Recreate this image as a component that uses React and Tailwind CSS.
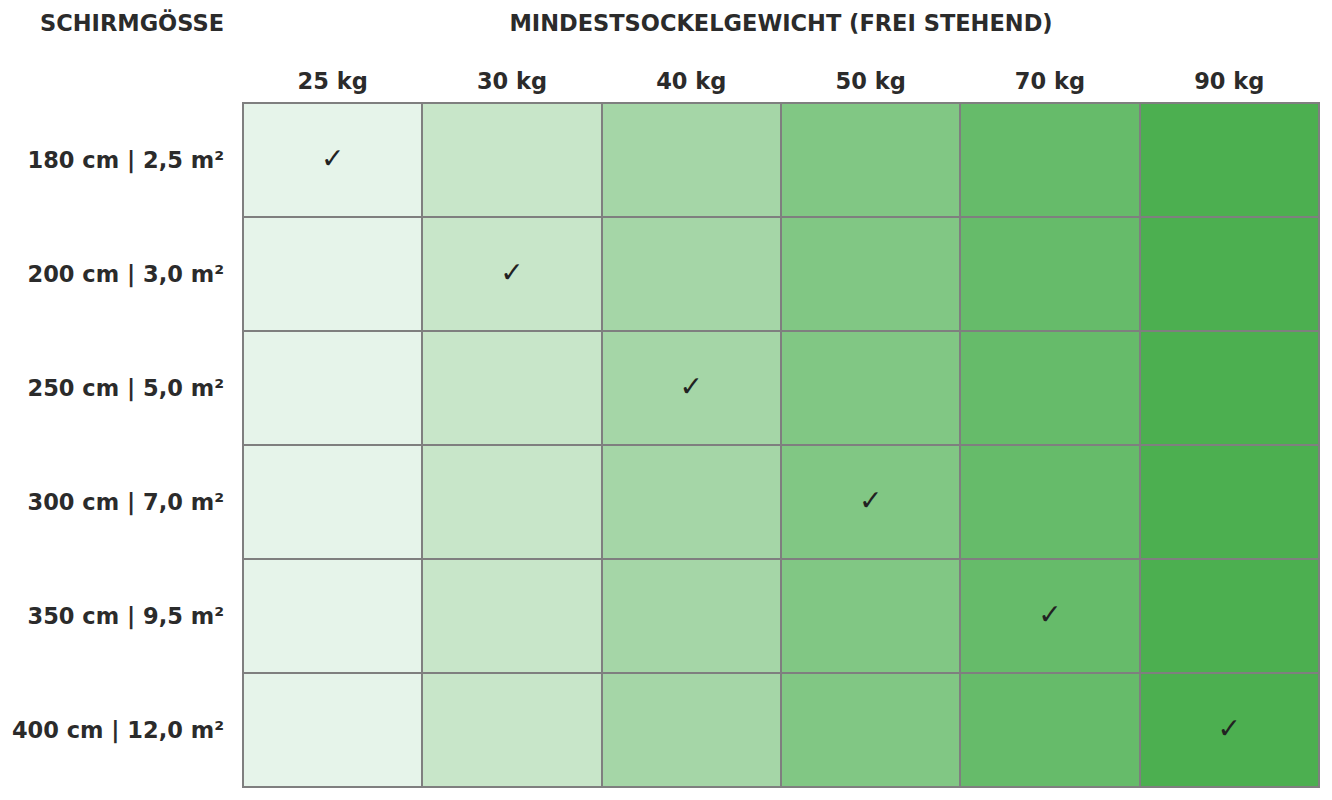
import React from "react";

const weights = ["25 kg", "30 kg", "40 kg", "50 kg", "70 kg", "90 kg"];
const sizes = [
  "180 cm | 2,5 m²",
  "200 cm | 3,0 m²",
  "250 cm | 5,0 m²",
  "300 cm | 7,0 m²",
  "350 cm | 9,5 m²",
  "400 cm | 12,0 m²",
];
const shades = [
  "bg-[#e6f4ea]",
  "bg-[#c8e6c9]",
  "bg-[#a5d6a7]",
  "bg-[#81c784]",
  "bg-[#66bb6a]",
  "bg-[#4caf50]",
];

const App = () => {
  return (
    <div className="w-[1332px] h-[800px] bg-white text-[#2b2b2b] font-bold text-[22.5px] leading-[26px] font-['DejaVu_Sans',sans-serif]">
      <div className="flex h-[46px] items-center">
        <div className="w-[243px] pr-[19px] text-right">SCHIRMGÖSSE</div>
        <div className="w-[1076px] text-center">MINDESTSOCKELGEWICHT (FREI STEHEND)</div>
      </div>
      <div className="flex h-[56px] items-end pb-[8px] pl-[243px]">
        {weights.map((w) => (
          <div key={w} className="w-[179.33px] text-center">
            {w}
          </div>
        ))}
      </div>
      <div className="flex">
        <div className="w-[242px] flex flex-col pt-[1px]">
          {sizes.map((s) => (
            <div key={s} className="h-[114px] flex items-center justify-end pr-[18px]">
              {s}
            </div>
          ))}
        </div>
        <div className="grid grid-cols-6 grid-rows-6 w-[1078px] h-[686px] gap-[2px] p-[2px] bg-[#7f7f7f]">
          {sizes.map((s, r) =>
            shades.map((c, i) => (
              <div key={s + i} className={`${c} flex items-center justify-center`}>
                {r === i && (
                  <span className="text-[28px] leading-none font-normal text-[#222] -mt-[2px]">✓</span>
                )}
              </div>
            ))
          )}
        </div>
      </div>
    </div>
  );
};

export default App;
